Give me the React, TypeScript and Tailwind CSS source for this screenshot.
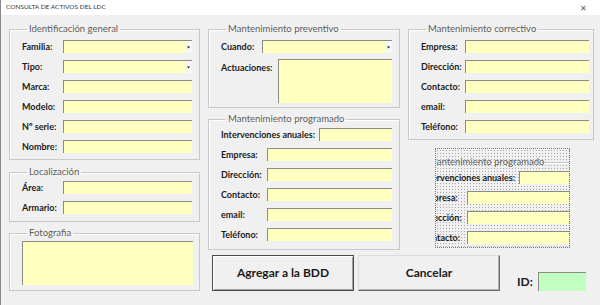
import type { ReactNode } from "react";

const box = "shrink-0 border-t border-l border-[#8c8c84] bg-[#ffffc0]";

function Frame({
  title,
  className = "",
  children,
}: {
  title: string;
  className?: string;
  children?: ReactNode;
}) {
  return (
    <fieldset
      className={`shrink-0 border border-[#c8c8c8] shadow-[inset_1px_1px_0_#ffffff] ${className}`}
    >
      <legend className="ml-[5px] px-[2px] text-[9.5px] leading-[10px] whitespace-nowrap text-[#5c5c5c]">
        {title}
      </legend>
      {children}
    </fieldset>
  );
}

function Arrow() {
  return (
    <span className="absolute top-0 right-0 flex h-full w-[7px] items-center justify-center bg-[#f7f7f2]">
      <svg width="3" height="3" viewBox="0 0 3 3">
        <path d="M0 0.5h3L1.5 2.5z" fill="#111" />
      </svg>
    </span>
  );
}

function Field({
  label,
  lw,
  iw,
  combo = false,
}: {
  label: string;
  lw: string;
  iw: string;
  combo?: boolean;
}) {
  return (
    <div className="flex h-[13px] items-center">
      <span
        className={`${lw} shrink-0 whitespace-nowrap text-[9px] leading-[13px] font-bold text-[#1c1c1c]`}
      >
        {label}
      </span>
      <div className={`relative h-[13px] ${iw} ${box}`}>{combo && <Arrow />}</div>
    </div>
  );
}

function Programado() {
  return (
    <Frame
      title="Mantenimiento programado"
      className="h-[136px] w-[192px] pt-[4px] pl-[12px]"
    >
      <div className="flex flex-col gap-[7px]">
        <Field label="Intervenciones anuales:" lw="w-[98px]" iw="w-[73px]" />
        <Field label="Empresa:" lw="w-[46px]" iw="w-[125px]" />
        <Field label="Dirección:" lw="w-[46px]" iw="w-[125px]" />
        <Field label="Contacto:" lw="w-[46px]" iw="w-[125px]" />
        <Field label="email:" lw="w-[46px]" iw="w-[125px]" />
        <Field label="Teléfono:" lw="w-[46px]" iw="w-[125px]" />
      </div>
    </Frame>
  );
}

export default function App() {
  return (
    <div className="h-[305px] w-[600px] overflow-hidden border-l border-[#8a8a8a] bg-[#f0f0f0] font-['Lato',sans-serif]">
      <div className="flex h-[15px] items-center justify-between bg-white pr-[13px] pl-[5px]">
        <span className="text-[6.5px] leading-none text-[#333]">
          CONSULTA DE ACTIVOS DEL LDC
        </span>
        <span className="text-[8px] leading-none text-[#555]">✕</span>
      </div>

      <div className="flex pt-[9px] pl-[8px]">
        <div className="flex w-[191px] flex-col">
          <Frame
            title="Identificación general"
            className="h-[136px] pt-[6px] pl-[12px]"
          >
            <div className="flex flex-col gap-[7px]">
              <Field label="Familia:" lw="w-[41px]" iw="w-[129px]" combo />
              <Field label="Tipo:" lw="w-[41px]" iw="w-[129px]" combo />
              <Field label="Marca:" lw="w-[41px]" iw="w-[129px]" />
              <Field label="Modelo:" lw="w-[41px]" iw="w-[129px]" />
              <Field label="Nº serie:" lw="w-[41px]" iw="w-[129px]" />
              <Field label="Nombre:" lw="w-[41px]" iw="w-[129px]" />
            </div>
          </Frame>

          <Frame
            title="Localización"
            className="mt-[7px] h-[55px] pt-[4px] pl-[12px]"
          >
            <div className="flex flex-col gap-[7px]">
              <Field label="Área:" lw="w-[41px]" iw="w-[129px]" />
              <Field label="Armario:" lw="w-[41px]" iw="w-[129px]" />
            </div>
          </Frame>

          <Frame title="Fotografia" className="mt-[6px] h-[63px] pt-[3px] pl-[12px]">
            <div className={`h-[44px] w-[171px] ${box}`} />
          </Frame>
        </div>

        <div className="ml-[8px] flex flex-col">
          <div className="flex">
            <div className="flex w-[192px] flex-col">
              <Frame
                title="Mantenimiento preventivo"
                className="h-[84px] pt-[6px] pl-[12px]"
              >
                <Field label="Cuando:" lw="w-[41px]" iw="w-[130px]" combo />
                <div className="mt-[6px] flex">
                  <span className="h-[13px] w-[57px] shrink-0 text-[9px] leading-[17px] font-bold text-[#1c1c1c]">
                    Actuaciones:
                  </span>
                  <div className={`h-[44px] w-[114px] ${box}`} />
                </div>
              </Frame>

              <div className="mt-[6px]">
                <Programado />
              </div>
            </div>

            <div className="ml-[8px] flex w-[186px] flex-col">
              <Frame
                title="Mantenimiento correctivo"
                className="h-[116px] pt-[6px] pl-[12px]"
              >
                <div className="flex flex-col gap-[7px]">
                  <Field label="Empresa:" lw="w-[44px]" iw="w-[124px]" />
                  <Field label="Dirección:" lw="w-[44px]" iw="w-[124px]" />
                  <Field label="Contacto:" lw="w-[44px]" iw="w-[124px]" />
                  <Field label="email:" lw="w-[44px]" iw="w-[124px]" />
                  <Field label="Teléfono:" lw="w-[44px]" iw="w-[124px]" />
                </div>
              </Frame>

              <div className="mt-[8px] ml-[27px] h-[100px] w-[135px] overflow-hidden border border-dotted border-[#7a7a7a] bg-[radial-gradient(circle,#a8a8a8_0.6px,transparent_0.9px)] bg-[length:3px_3px]">
                <div className="mt-[8px] -ml-[28px]">
                  <Programado />
                </div>
              </div>
            </div>
          </div>

          <div className="mt-[5px] flex items-end">
            <button
              type="button"
              className="ml-[4px] h-[36px] w-[142px] border border-[#4a4a4a] bg-[#f0f0f0] text-[12px] font-bold text-[#1a1a1a] shadow-[inset_1px_1px_0_#ffffff,inset_-1px_-1px_0_#a0a0a0]"
            >
              Agregar a la BDD
            </button>
            <button
              type="button"
              className="ml-[4px] h-[36px] w-[142px] border border-t-[#dcdcdc] border-r-[#696969] border-b-[#696969] border-l-[#dcdcdc] bg-[#f0f0f0] text-[12px] font-bold text-[#1a1a1a] shadow-[inset_-1px_-1px_0_#b4b4b4]"
            >
              Cancelar
            </button>
            <span className="mb-[2px] ml-[17px] text-[12px] leading-[15px] font-bold text-[#1a1a1a]">
              ID:
            </span>
            <div className="ml-[5px] h-[19px] w-[48px] border-t border-l border-[#8c8c84] bg-[#c0ffc0]" />
          </div>
        </div>
      </div>
    </div>
  );
}
